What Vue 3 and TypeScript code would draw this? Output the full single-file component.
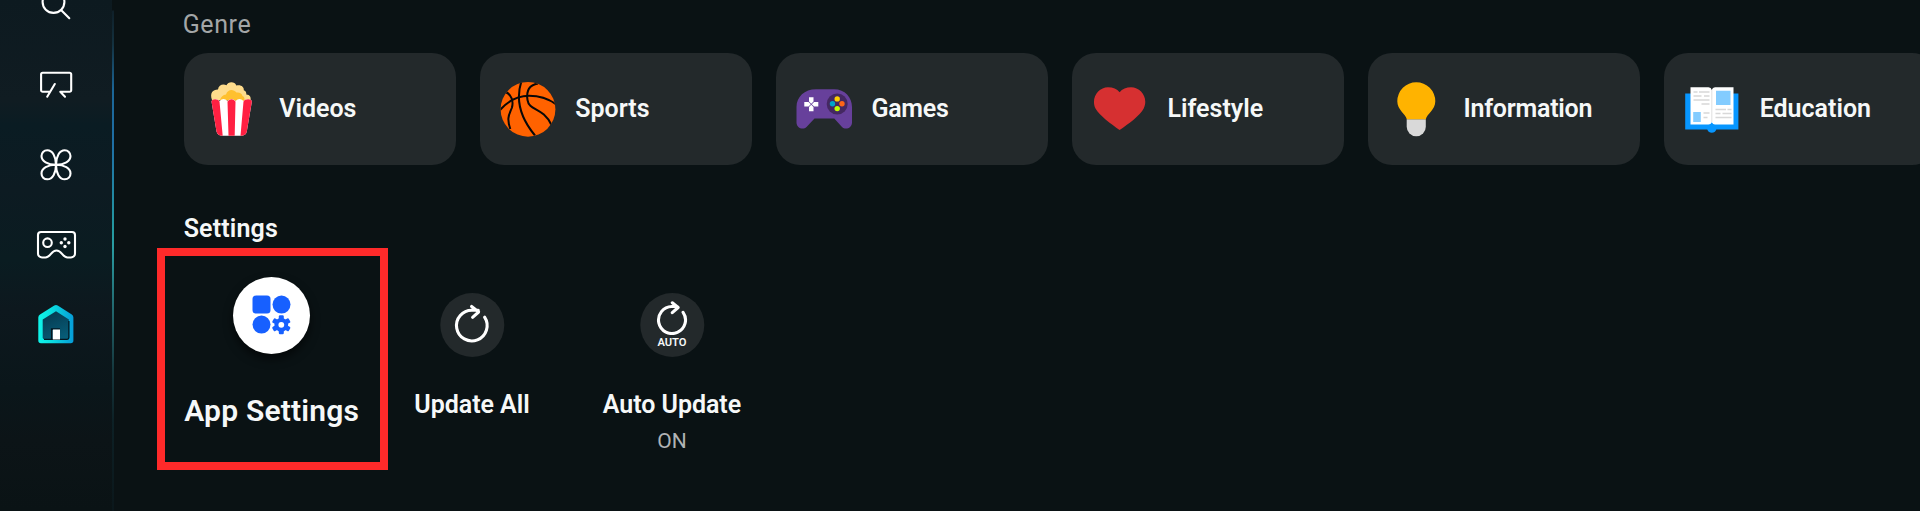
<script setup lang="ts">
interface Genre {
  id: string
  label: string
}

const genres: Genre[] = [
  { id: 'videos', label: 'Videos' },
  { id: 'sports', label: 'Sports' },
  { id: 'games', label: 'Games' },
  { id: 'lifestyle', label: 'Lifestyle' },
  { id: 'information', label: 'Information' },
  { id: 'education', label: 'Education' },
]
</script>

<template>
  <div class="screen">
    <nav class="sidebar">
      <svg class="nav-icon" viewBox="0 0 48 48">
        <circle cx="21.5" cy="21" r="10.9" />
        <path d="M29.3 29.2 37.3 37.2" />
      </svg>
      <svg class="nav-icon" viewBox="0 0 48 48">
        <path d="M18 30.8H10.7a1.6 1.6 0 0 1-1.6-1.6V13.3a1.6 1.6 0 0 1 1.6-1.6H37.6a1.6 1.6 0 0 1 1.6 1.6V29.2a1.6 1.6 0 0 1-1.6 1.6H28.3L33 35.7M22.8 23 15.2 35.7" />
      </svg>
      <svg class="nav-icon" viewBox="0 0 48 48">
        <g v-for="n in 4" :key="n" :transform="`rotate(${n * 90} 24 23.8)`">
          <path d="M24 23.8C24 15.500 20.500 9.300 15.300 9.300C11.800 9.300 9.500 11.800 9.500 15.100C9.500 20.300 15.700 23.800 24 23.800Z" />
        </g>
      </svg>
      <svg class="nav-icon" viewBox="0 0 48 48">
        <path d="M9 11H40a3 3 0 0 1 3 3V32.500a4 4 0 0 1-4 4H35.500C30.500 36.500 30 29.500 24.500 29.500C19 29.500 18.500 36.500 13.500 36.500H10a4 4 0 0 1-4-4V14a3 3 0 0 1 3-3Z" />
        <circle cx="15.500" cy="21.700" r="4.300" />
        <g class="solid">
          <circle cx="33" cy="18" r="1.700" /><circle cx="33" cy="25.500" r="1.700" />
          <circle cx="29.300" cy="21.800" r="1.700" /><circle cx="36.800" cy="21.800" r="1.700" />
        </g>
      </svg>
      <svg class="home-icon" viewBox="0 0 48 48">
        <defs>
          <linearGradient id="homeEdge" x1="0" x2="1"><stop offset="0" stop-color="#0ff5ea" /><stop offset=".35" stop-color="#0be0e0" /><stop offset="1" stop-color="#069cd8" /></linearGradient>
          <linearGradient id="homeFill" x1=".3" x2=".7" y1="0" y2="1"><stop offset="0" stop-color="#063a50" /><stop offset="1" stop-color="#075d78" /></linearGradient>
        </defs>
        <path d="M22.300 4.500Q24 3.300 25.700 4.500L39.800 13.500Q41.400 14.500 41.400 16.500V39.600Q41.400 42.300 38.700 42.300H9Q6.300 42.300 6.300 39.600V16.500Q6.300 14.500 8 13.500Z" fill="url(#homeEdge)" />
        <path d="M24 10.200 36.900 18.500V36.500Q36.900 38.300 35.200 38.300H12.300Q10.700 38.300 10.700 36.500V18.500Z" fill="url(#homeFill)" />
        <path d="M36.900 20V36.500Q36.900 38.300 35.200 38.300H12" fill="none" stroke="#04161f" stroke-width="1.300" />
        <path d="M19.700 38.300V28H28" fill="none" stroke="#04161f" stroke-width="1.500" />
        <path d="M20.800 38.500V29Q20.800 28.600 21.200 28.600H28V38.500Z" fill="#fff" />
      </svg>
    </nav>

    <main class="content">
      <h2 class="heading genre-heading">Genre</h2>
      <div class="genres">
        <div v-for="g in genres" :key="g.id" class="card">
          <svg v-if="g.id === 'videos'" class="card-icon" viewBox="0 0 56 56">
            <path d="M8 19C5.500 12 9 8.500 14 8.600C14.500 4 19 2.500 22.500 4.300C24 .2 31 .2 32.300 4.500C36.500 3.200 40.300 5.500 39.800 9.300C42 9.800 42.500 12 42.300 13.500C46 13.500 47.500 16.500 46.300 20Z" fill="#ffdc8c" />
            <path d="M16 19C17 15.500 19 14 22 13.500C23.500 8 29.500 7.500 32.500 11.500C35.500 11 38 12.500 38.500 15C40.500 15.500 41 18 40 20Z" fill="#ffc02e" />
            <path d="M7.500 20.500C8 17.500 14 17.500 15.500 20Q19.500 16 23.500 20Q27.500 16 31.500 20Q35.500 16 39.500 20C42 17.500 47.500 17.500 47.900 20.500L42.800 50.500Q42 54.500 38 54.700H17.500Q13.500 54.500 12.500 50.500Z" fill="#fff" />
            <path d="M7.500 20.500C8 17.500 14 17.500 15.500 20.500L18.700 54.700H17.500Q13.500 54.500 12.500 50.500ZM23.500 20.500Q27.500 16 31.500 20.500L30.700 54.700H24.500ZM39.500 20.500C41 17.500 47.500 17.500 47.900 20.500L42.800 50.500Q42 54.500 38 54.700H36.500Z" fill="#ff2042" />
          </svg>

          <svg v-else-if="g.id === 'sports'" class="card-icon" viewBox="0 0 56 56">
            <defs><clipPath id="ball"><circle cx="28" cy="28.300" r="27.400" /></clipPath></defs>
            <circle cx="28" cy="28.300" r="27.400" fill="#ff6200" />
            <g clip-path="url(#ball)" fill="none" stroke="#080808" stroke-width="2">
              <path d="M0 29C9 19 18 14.800 29 14.800C39 14.800 48 17 57 24" />
              <path d="M21.500 0C16.500 15 18 34 35 54.500" />
              <path d="M38 2.500C29 4 26 9.500 27.500 19C29 30 43 26 51.500 44" />
              <path d="M5.500 11C11 13 14 20 11.800 27C9 34 6.500 37 10.300 48" />
            </g>
          </svg>

          <svg v-else-if="g.id === 'games'" class="card-icon" viewBox="0 0 56 56">
            <path d="M20 8.300H38C49 8.300 56 16.500 56 26V41.500C56 47 49.500 49.500 46 46L38.300 37.500H18.500L10.500 46C7 49.500.5 47 .5 41.500V26C.5 16 8.500 8.300 20 8.300Z" fill="#67409b" />
            <path d="M13 16.300h4.500v4.200l-2.250 2.300-2.250-2.300ZM13 30.300h4.500v-4.200l-2.250-2.300-2.250 2.300ZM8.300 21h4.200l2.300 2.250-2.300 2.250H8.300ZM22.300 21h-4.200l-2.300 2.250 2.300 2.250h4.200Z" fill="#fff" />
            <circle cx="41.200" cy="23" r="10.500" fill="#442861" />
            <circle cx="41.200" cy="17.900" r="2.700" fill="#ffd000" /><circle cx="36.500" cy="22.800" r="2.700" fill="#00a6c9" />
            <circle cx="46" cy="22.800" r="2.700" fill="#ff6517" /><circle cx="41.200" cy="27.600" r="2.700" fill="#c4ff00" />
          </svg>

          <svg v-else-if="g.id === 'lifestyle'" class="card-icon" viewBox="0 0 56 56">
            <path d="M27.600 49C19 43 7.500 34.500 3.500 27.500C-1.500 17 6.500 6.300 16 6.300C21 6.300 25 8 27.600 11.300C30.200 8 34.500 6.300 39 6.300C49 6.300 56.700 17 51.700 27.500C48 34.500 36.500 43 27.600 49Z" fill="#d63031" />
          </svg>

          <svg v-else-if="g.id === 'information'" class="card-icon" viewBox="0 0 56 56">
            <path d="M18.700 38.300H37.800V45.700A9.550 9.550 0 0 1 18.700 45.700Z" fill="#d9d9d9" />
            <path d="M28.300 1.200A19 19 0 0 0 9.300 20.200C9.300 29 17.500 32.500 18.800 38.300H37.800C39 32.500 47.300 29 47.300 20.200A19 19 0 0 0 28.300 1.200Z" fill="#ffb300" />
          </svg>

          <svg v-else class="card-icon" viewBox="0 0 56 56">
            <path d="M1.200 12.500H54.400V48.500H32.300Q31 51.700 27.800 51.700Q24.500 51.700 23.300 48.500H1.200Z" fill="#0796ff" />
            <path d="M6.500 6.200H24.500Q27.200 6.500 27.800 9Q28.500 6.500 31 6.200H49.500V43.500H31Q28.800 43.500 27.800 41.200Q26.800 43.500 24.500 43.500H6.500Z" fill="#fff" />
            <path d="M27.800 9V41" stroke="#d8d8d8" stroke-width=".8" />
            <path d="M32 9.800H46.500V24H32ZM9.200 31H16.800V41H9.200Z" fill="#83ccff" />
            <path d="M9.500 11h4M15 11h10.500M9.500 15h8M20 15h5.500M9.500 19h16M17.500 23h8M19.500 32h6M19.500 36.500h4M31.500 28.500h10.500M43.500 28.500h4M31.500 32.500h5M38.500 32.500h9M31.500 36.500h16" stroke="#d8d8d8" stroke-width="1.300" />
          </svg>
          <span class="card-label" :class="g.id">{{ g.label }}</span>
        </div>
      </div>

      <h2 class="heading settings-heading">Settings</h2>
      <div class="settings">
        <div class="setting focused">
          <span class="disc">
            <svg viewBox="0 0 77 77">
              <rect x="19.500" y="18.600" width="18" height="18" rx="3.500" />
              <circle cx="48.500" cy="27.600" r="9" /><circle cx="28.500" cy="47.600" r="9" />
              <g transform="translate(48.300 47.800)">
                <circle r="6.900" />
                <g v-for="n in 6" :key="n" :transform="`rotate(${n * 60})`"><rect x="-2.500" y="-9.500" width="5" height="6" rx="1.200" /></g>
                <circle r="2.900" class="hole" />
              </g>
            </svg>
          </span>
          <span class="name">App Settings</span>
        </div>
        <div class="setting">
          <span class="disc">
            <svg viewBox="0 0 64 64" class="line">
              <path d="M44.300 24.200A15.300 15.300 0 1 1 32 17.300H38M31.300 13.500 38.300 19 32.300 24.300" />
            </svg>
          </span>
          <span class="name update">Update All</span>
        </div>
        <div class="setting">
          <span class="disc auto">
            <svg viewBox="0 0 64 42" class="line">
              <path d="M42.800 19.300A13.500 13.500 0 1 1 31.500 13.500H37M32 9.800 37.800 14.500 32 19.700" />
            </svg>
            <span class="auto-text">AUTO</span>
          </span>
          <span class="name auto-update">Auto Update</span>
          <span class="state">ON</span>
        </div>
        <div class="highlight"></div>
      </div>
    </main>
  </div>
</template>

<style>
body {
  background: #0a1214;
  overflow: hidden;
}
</style>

<style scoped>
.screen {
  display: flex;
  width: 1920px;
  height: 511px;
  overflow: hidden;
  box-sizing: border-box;
  background: #0a1214;
  color: #f6f8f8;
  font-family: Roboto, "Noto Sans", sans-serif;
}
.sidebar {
  flex: none;
  display: flex;
  flex-direction: column;
  align-items: center;
  gap: 32px;
  width: 112px;
  height: 511px;
  box-sizing: border-box;
  background: linear-gradient(180deg, #0d1a20 0, #101c22 100px, #0a1c23 125px, #0d1b22 190px, #0a1c21 260px, #0d181e 310px, #0a161a 390px, #0c1417 440px, #0a1315 511px);
}
.sidebar svg {
  flex: none;
  width: 48px;
  height: 48px;
}
.sidebar svg:first-child {
  margin-top: -19px;
}
.nav-icon {
  fill: none;
  stroke: #fff;
  stroke-width: 2.1;
  stroke-linecap: round;
  stroke-linejoin: round;
}
.nav-icon .solid {
  fill: #fff;
  stroke: none;
}
.content {
  flex: 1;
  min-width: 0;
  overflow: hidden;
  padding-left: 69.7px;
  border-style: solid;
  border-width: 0 0 0 2px;
  border-image: linear-gradient(180deg, #0a1214 0, #0a1214 11px, #0f2029 12px, #14313f 45px, #1b6596 90px, #1f6fa5 145px, #2499a0 230px, #2a9ca2 245px, #205f65 320px, #15373d 370px, #0d2126 420px, #0b171b 511px) 1;
}
.heading {
  margin: 0;
  font-size: 25px;
  line-height: 30px;
}
.genre-heading {
  margin-top: 10px;
  margin-left: -1px;
  color: #a3a6a7;
  font-weight: 400;
  letter-spacing: 0.6px;
}
.genres {
  display: flex;
  gap: 24.1px;
  margin-top: 13px;
}
.card {
  flex: none;
  display: flex;
  align-items: center;
  gap: 19.5px;
  width: 272px;
  height: 112px;
  padding-left: 20px;
  box-sizing: border-box;
  border-radius: 24px;
  background: #23292b;
}
.card-icon {
  width: 56px;
  height: 56px;
}
.card-label {
  font-size: 25px;
  font-weight: 600;
  line-height: 30px;
  letter-spacing: 0;
  white-space: nowrap;
}
.card-label.games,
.card-label.information {
  letter-spacing: -0.25px;
}
.settings-heading {
  margin-top: 49px;
  font-weight: 600;
  letter-spacing: 0.15px;
}
.settings {
  position: relative;
  display: flex;
  margin: 33px 0 0 -12px;
}
.setting {
  display: flex;
  flex-direction: column;
  align-items: center;
  width: 200px;
  padding-top: 16px;
}
.setting:not(.focused) {
  transform: translateX(0.3px);
}
.disc {
  display: flex;
  flex-direction: column;
  align-items: center;
  width: 64px;
  height: 64px;
  border-radius: 50%;
  background: #23292b;
}
.disc svg {
  display: block;
  width: 100%;
}
.line {
  fill: none;
  stroke: #fff;
  stroke-width: 3.1;
  stroke-linecap: round;
  stroke-linejoin: round;
}
.auto-text {
  margin-top: 1px;
  font-size: 11.2px;
  font-weight: 600;
  line-height: 14px;
}
.name {
  margin-top: 33px;
  font-size: 25px;
  font-weight: 600;
  line-height: 30px;
  letter-spacing: -0.05px;
  white-space: nowrap;
}
.state {
  margin-top: 8px;
  color: #b0b3b4;
  font-size: 21px;
  line-height: 26px;
}
.focused {
  padding-top: 0;
}
.focused .disc {
  width: 77px;
  height: 77px;
  background: #fff;
  box-shadow: 0 5px 10px rgba(0, 0, 0, 0.6);
}
.focused .disc svg {
  fill: #1760ff;
}
.focused .disc .hole {
  fill: #fff;
}
.focused .name {
  margin-top: 39px;
  font-size: 30px;
  line-height: 36px;
  letter-spacing: 0.2px;
}
.highlight {
  position: absolute;
  left: -15px;
  top: -29px;
  width: 231px;
  height: 222px;
  box-sizing: border-box;
  border: 8px solid #ff2a2a;
}
</style>
